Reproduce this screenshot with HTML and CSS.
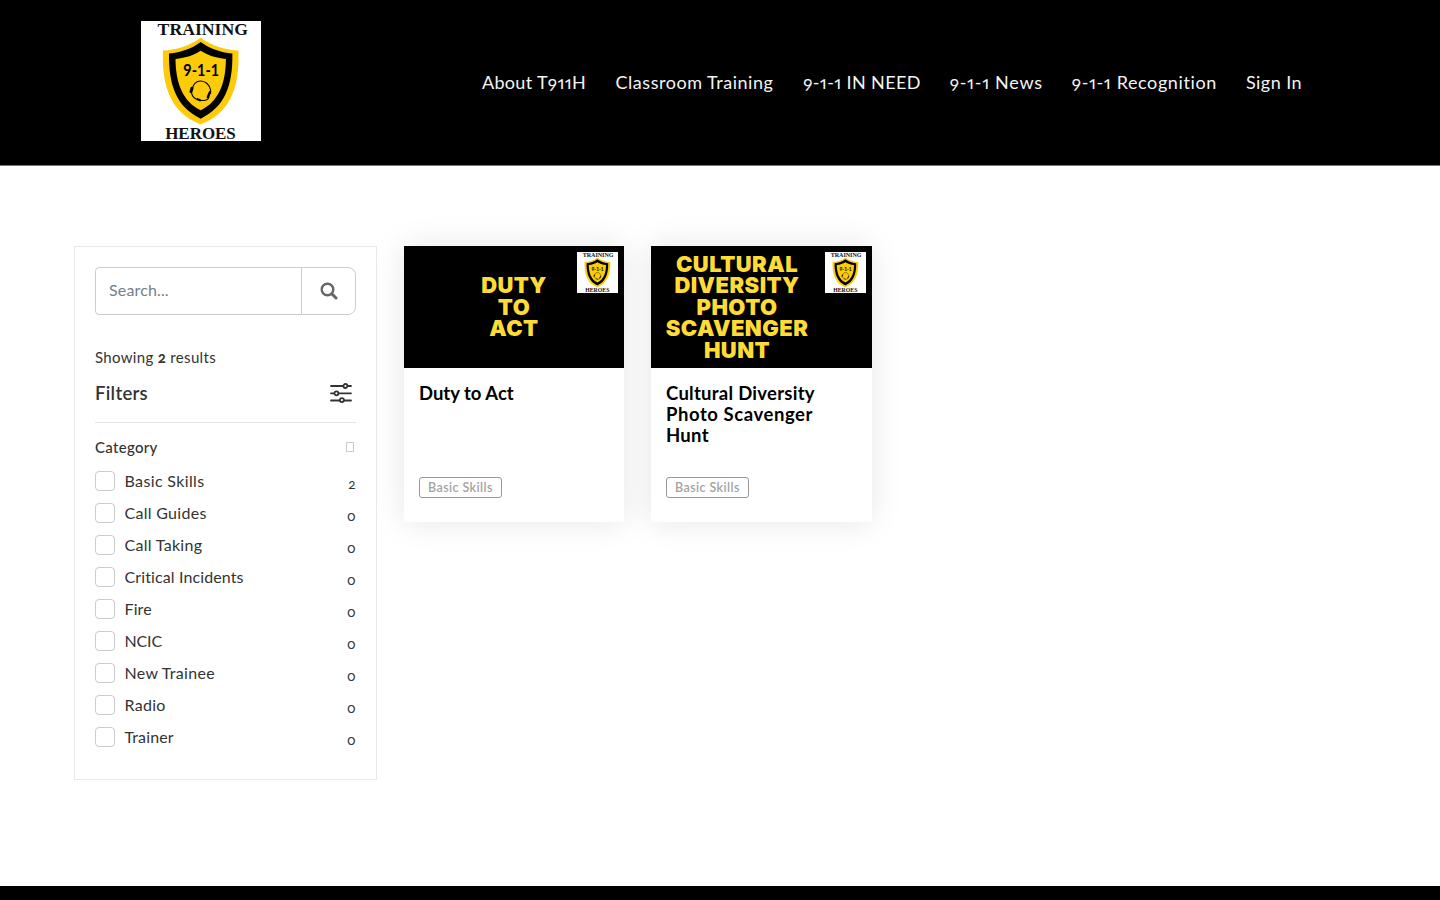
FILE: index.html
```
<!DOCTYPE html>
<html lang="en">
<head>
<meta charset="utf-8">
<title>Training 9-1-1 Heroes</title>
<link rel="stylesheet" href="styles.css">
</head>
<body>
<svg class="defs" width="0" height="0" aria-hidden="true">
  <symbol id="logo" viewBox="0 0 119 119">
    <rect width="119" height="119" fill="#fff"/>
    <path d="M59.2 16.5C49 24 36 28.5 21.8 29.3C20.5 66 30 91 59.2 102.6C88.500 91 98 66 96.600 29.300C82.500 28.500 69.500 24 59.200 16.500Z" fill="#fccb09"/>
    <path d="M59.200 20.800C50.500 27.300 40 31 27.800 32.300C27.300 64 35.500 85.500 59.200 96.900C83 85.500 91.200 64 90.600 32.300C78.500 31 68 27.300 59.200 20.800Z" fill="#000"/>
    <path d="M59.200 29.500C52.500 34 44.500 36.600 34.200 37.600C34.500 62 41.500 79.500 59.200 88.600C77 79.500 84 62 84.200 37.600C74 36.600 66 34 59.200 29.500Z" fill="#fccb09"/>
    <text class="logo-serif" x="16.500" y="13.600" textLength="89.500" lengthAdjust="spacingAndGlyphs">TRAINING</text>
    <text class="logo-serif" x="24" y="117.500" textLength="70" lengthAdjust="spacingAndGlyphs">HEROES</text>
    <text class="logo-num" x="42" y="54.300" textLength="35.500" lengthAdjust="spacingAndGlyphs">9-1-1</text>
    <g fill="none" stroke="#000" stroke-width="1.100" stroke-linecap="round">
      <path d="M51 68C51.500 56.500 66.500 56.500 69 68.500V72M50 70.500C50.500 74 52.500 76.500 55 77.500M67.500 74C67.500 77 65.500 78.800 62.500 78.800H59"/>
      <path d="M50.500 66.800L49.600 70" stroke-width="3"/>
      <path d="M68.300 70.500L66.200 75.500" stroke-width="2.200"/>
      <path d="M56 77.500L58.500 78.700" stroke-width="2.200"/>
    </g>
  </symbol>
</svg>

<header class="header">
  <a class="brand"><svg width="120" height="120"><use href="#logo"/></svg></a>
  <nav class="nav">
    <a class="n1">About T911H</a>
    <a class="n2">Classroom Training</a>
    <a class="n3">9-1-1 IN NEED</a>
    <a class="n4">9-1-1 News</a>
    <a class="n5">9-1-1 Recognition</a>
    <a class="n6">Sign In</a>
  </nav>
</header>

<main class="main">
  <aside class="sidebar">
    <form class="search">
      <input type="text" placeholder="Search...">
      <button type="button" aria-label="Search">
        <svg width="18" height="18" viewBox="0 0 18 18" fill="none" stroke="#666"><circle cx="7.500" cy="7.500" r="5.800" stroke-width="2.400"/><path d="M11.800 11.800L16 16" stroke-width="3" stroke-linecap="round"/></svg>
      </button>
    </form>
    <p class="showing">Showing <b>2</b> results</p>
    <div class="filters">
      <h2>Filters</h2>
      <svg width="22" height="20" viewBox="0 0 22 20" stroke="#333" stroke-width="1.800" stroke-linecap="round" fill="#fff"><path d="M1 3H21M1 10.300H21M1 17.500H21"/><circle cx="15.400" cy="3" r="2"/><circle cx="6.400" cy="10.300" r="2"/><circle cx="11.900" cy="17.100" r="2"/></svg>
    </div>
    <div class="category"><h3>Category</h3><span class="toggle"></span></div>
    <ul class="list">
      <li><i></i><span class="w3">Basic Skills</span><em>2</em></li>
      <li><i></i><span>Call Guides</span><em>0</em></li>
      <li><i></i><span>Call Taking</span><em>0</em></li>
      <li><i></i><span class="w1">Critical Incidents</span><em>0</em></li>
      <li><i></i><span class="w1">Fire</span><em>0</em></li>
      <li><i></i><span class="w0">NCIC</span><em>0</em></li>
      <li><i></i><span>New Trainee</span><em>0</em></li>
      <li><i></i><span>Radio</span><em>0</em></li>
      <li><i></i><span class="w1">Trainer</span><em>0</em></li>
    </ul>
  </aside>

  <section class="cards">
    <article class="card">
      <div class="cover">
        <div class="cover-title">DUTY<br>TO<br>ACT</div>
        <svg class="stamp" width="41" height="41"><use href="#logo"/></svg>
      </div>
      <div class="body"><h4 class="t1">Duty to Act</h4><span class="tag">Basic Skills</span></div>
    </article>
    <article class="card second">
      <div class="cover">
        <div class="cover-title shifted">CULTURAL<br>DIVERSITY<br>PHOTO<br>SCAVENGER<br>HUNT</div>
        <svg class="stamp" width="41" height="41"><use href="#logo"/></svg>
      </div>
      <div class="body"><h4>Cultural Diversity<br><span class="wide">Photo Scavenger</span><br>Hunt</h4><span class="tag">Basic Skills</span></div>
    </article>
  </section>
</main>
<footer class="footer"></footer>
</body>
</html>
```
FILE: styles.css
```
* { box-sizing: border-box; }
body {
  margin: 0;
  height: 900px;
  overflow: hidden;
  display: flex;
  flex-direction: column;
  background: #fff;
  color: #333;
  font-family: Lato, sans-serif;
  font-feature-settings: "onum", "pnum";
}
h2, h3, h4, p, ul { margin: 0; padding: 0; }
.defs { position: absolute; }
.logo-serif { font: 700 17.500px "Liberation Serif", serif; fill: #111; }
.logo-num { font: 700 17px Lato, sans-serif; font-feature-settings: "lnum"; fill: #000; }

.header {
  flex: none;
  display: flex;
  justify-content: space-between;
  height: 166px;
  padding: 21px 138px 0 141px;
  background: #000;
  border-bottom: 1px solid #777;
}
.brand svg { display: block; }
.nav { display: flex; gap: 29.600px; padding-top: 49px; }
.nav a { color: #f4f4f4; font-size: 18px; line-height: 24px; white-space: nowrap; }
.n1 { width: 104px; letter-spacing: .330px; }
.n2 { width: 158px; letter-spacing: .530px; }
.n3 { width: 117px; letter-spacing: .380px; }
.n4 { width: 92.500px; letter-spacing: .7px; }
.n5 { width: 144.600px; letter-spacing: .610px; }
.n6 { width: 56px; letter-spacing: .430px; }

.main { flex: 1; display: flex; align-items: flex-start; gap: 27px; padding: 80px 74px 0; }
.sidebar { width: 303px; height: 534px; padding: 20px; border: 1px solid #e9e9e9; }
.search { display: flex; height: 48px; width: 261px; }
.search input {
  width: 207px;
  padding: 0 13px 3px;
  border: 1px solid #ccc;
  border-radius: 4px 0 0 4px;
  background: #fff;
  font: 16px Lato, sans-serif;
  letter-spacing: .150px;
  outline: 0;
}
.search input::placeholder { color: #75808a; }
.search button {
  display: flex;
  align-items: center;
  justify-content: center;
  width: 55px;
  margin-left: -1px;
  padding: 0;
  border: 1px solid #ccc;
  border-radius: 0 8px 8px 0;
  background: #fff;
}
.showing { margin-top: 32px; font-size: 15px; line-height: 20px; letter-spacing: .320px; }
.filters {
  display: flex;
  align-items: center;
  justify-content: space-between;
  height: 56px;
  padding: 0 4px 3px 0;
  border-bottom: 1px solid #e5e5e5;
}
.filters h2 { font-size: 18.500px; font-weight: 600; letter-spacing: .300px; }
.category { display: flex; align-items: center; justify-content: space-between; height: 48px; padding-right: 2px; }
.category h3 { font-size: 15px; font-weight: 500; letter-spacing: .300px; }
.toggle { width: 8px; height: 10px; border: 1px solid #ccc; }
.list { list-style: none; }
.list li { display: flex; height: 32px; }
.list i { width: 20px; height: 20px; border: 1px solid #ccc; border-radius: 4px; }
.list span { margin-left: 9.500px; font-size: 16px; line-height: 20px; letter-spacing: .290px; }
.list .w0 { letter-spacing: -.150px; }
.list .w1 { letter-spacing: .120px; }
.list .w3 { letter-spacing: .360px; }
.list em { margin: 3px .500px 0 auto; font-size: 13.500px; line-height: 20px; font-style: normal; }

.cards { display: flex; gap: 27px; }
.card { width: 220px; height: 276px; background: #fff; box-shadow: 0 0 30px rgba(0, 0, 0, .1); }
.card.second { width: 221px; }
.cover { position: relative; display: flex; align-items: center; justify-content: center; height: 122px; background: #000; }
.cover-title { padding-top: 1px; color: #ffdc35; text-align: center; font: 900 22px/21.500px Inter, sans-serif; letter-spacing: .450px; }
.shifted { margin-right: 49px; }
.stamp { position: absolute; top: 6px; right: 6px; }
.body { display: flex; flex-direction: column; align-items: flex-start; justify-content: space-between; height: 130px; padding: 15px 15px 0; }
.body h4 { color: #000; font-size: 18.500px; line-height: 21px; font-weight: 700; letter-spacing: .270px; }
.body .t1 { letter-spacing: 0; }
.wide { letter-spacing: .560px; }
.tag {
  height: 21px;
  padding: 0 8px;
  border: 1px solid #999;
  border-radius: 3px;
  color: #a3a3a3;
  font-size: 12.500px;
  line-height: 19.500px;
  font-weight: 600;
  letter-spacing: .410px;
}
.footer { flex: none; height: 14px; background: #000; }
```
